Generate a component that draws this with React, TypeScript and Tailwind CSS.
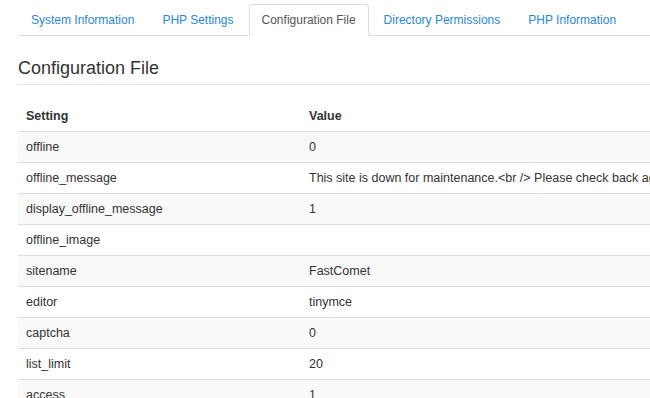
import React from 'react';

const tabs = ['System Information', 'PHP Settings', 'Configuration File', 'Directory Permissions', 'PHP Information'];

const rows: [string, string][] = [
  ['offline', '0'],
  ['offline_message', 'This site is down for maintenance.<br /> Please check back again soon.'],
  ['display_offline_message', '1'],
  ['offline_image', ''],
  ['sitename', 'FastComet'],
  ['editor', 'tinymce'],
  ['captcha', '0'],
  ['list_limit', '20'],
  ['access', '1'],
];

export default function App() {
  return (
    <div className="w-[650px] h-[398px] overflow-hidden bg-white text-[#333] font-['Liberation_Sans',Arial,sans-serif]">
      <div className="w-[1000px] pl-[18px] pt-[4px]">
        {/* tabs */}
        <ul className="flex border-b border-[#ddd] text-[12px] leading-[18px]">
          {tabs.map(t => {
            const active = t === 'Configuration File';
            return (
              <li key={t} className="-mb-px mr-[2px]">
                {active ? (
                  <span className="block px-[12px] py-[6px] bg-white border border-[#ddd] border-b-white rounded-t-[4px] text-[#555]">{t}</span>
                ) : (
                  <span className="block px-[12px] py-[6px] border border-transparent text-[#2a88d6]">{t}</span>
                )}
              </li>
            );
          })}
        </ul>

        {/* heading */}
        <h2 className="mt-[22px] pb-[6px] border-b border-[#e5e5e5] text-[18px] leading-[20px] text-[#333]">Configuration File</h2>

        {/* table */}
        <table className="mt-[16px] w-full border-collapse text-[12.5px] leading-[18px]">
          <thead>
            <tr className="border-b border-[#ddd]">
              <th className="w-[283px] text-left font-bold px-[8px] py-[6px]">Setting</th>
              <th className="text-left font-bold px-[8px] py-[6px]">Value</th>
            </tr>
          </thead>
          <tbody>
            {rows.map(([k, v], i) => (
              <tr key={k} className={`border-b border-[#ddd] ${i % 2 === 0 ? 'bg-[#f9f9f9]' : 'bg-white'}`}>
                <td className="px-[8px] py-[6px] h-[31px]">{k}</td>
                <td className="px-[8px] py-[6px] h-[31px] whitespace-nowrap">{v}</td>
              </tr>
            ))}
          </tbody>
        </table>
      </div>
    </div>
  );
}
